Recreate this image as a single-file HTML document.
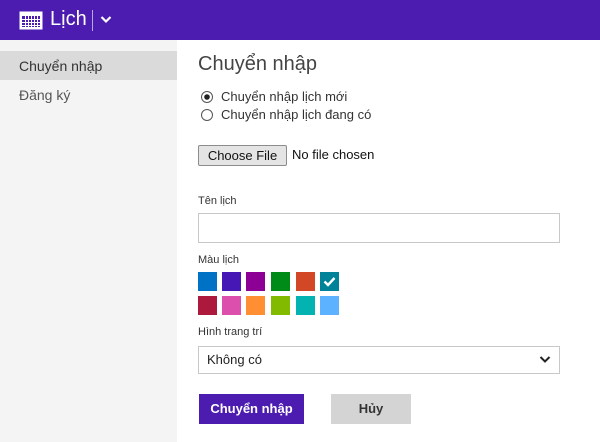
<!DOCTYPE html>
<html><head><meta charset="utf-8"><style>
*{margin:0;padding:0;box-sizing:border-box}
body{width:600px;height:442px;overflow:hidden;background:#fff;font-family:"Liberation Sans",sans-serif;color:#333;position:relative}
.hdr{position:absolute;left:0;top:0;width:600px;height:40px;background:#4c1cb1}
.a{position:absolute;white-space:nowrap}
.side{position:absolute;left:0;top:40px;width:177px;height:402px;background:#f4f4f4}
.sw{position:absolute;width:19px;height:19px}
</style></head><body>
<div class="hdr">
<svg class="a" style="left:19px;top:11px" width="24" height="19" viewBox="0 0 24 19"><rect x="0.5" y="0.5" width="23" height="18" fill="#fff"/><g fill="#4c1cb1"><rect x="3" y="5" width="18" height="11"/></g><g stroke="#fff" stroke-width="1"><path d="M6.5 5v11M9.5 5v11M12.5 5v11M15.5 5v11M18.5 5v11M3 8.5h18M3 11.5h18M3 14.5h18"/></g></svg>
<div class="a" style="left:50px;top:8px;font-size:20px;color:#fff">Lịch</div>
<div class="a" style="left:92px;top:10px;width:1px;height:21px;background:#b9a6e6"></div>
<svg class="a" style="left:100px;top:15px" width="12" height="9"><path d="M1.5 2l4.5 4.5 4.5-4.5" stroke="#fff" stroke-width="2.2" fill="none"/></svg>
</div>
<div class="side">
<div class="a" style="left:0;top:11px;width:177px;height:29px;background:#dadada"></div>
<div class="a" style="left:19px;top:18px;font-size:14px;color:#333">Chuyển nhập</div>
<div class="a" style="left:19px;top:47px;font-size:14px;color:#555">Đăng ký</div>
</div>
<div class="a" style="left:198px;top:53px;font-size:20px;color:#444">Chuyển nhập</div>
<svg class="a" style="left:201px;top:91px" width="12" height="30"><circle cx="6" cy="6" r="5.5" fill="#fff" stroke="#555"/><circle cx="6" cy="6" r="2.8" fill="#222"/><circle cx="6" cy="24" r="5.5" fill="#fff" stroke="#555"/></svg>
<div class="a" style="left:221px;top:89px;font-size:13px">Chuyển nhập lịch mới</div>
<div class="a" style="left:221px;top:107px;font-size:13px">Chuyển nhập lịch đang có</div>
<div class="a" style="left:198px;top:145px;width:89px;height:21px;background:#e4e4e4;border:1px solid #8c8c8c;border-radius:2px;font-size:13px;text-align:center;line-height:19px;color:#111">Choose File</div>
<div class="a" style="left:292px;top:147px;font-size:13px;color:#111">No file chosen</div>
<div class="a" style="left:198px;top:195px;font-size:11px;color:#333">Tên lịch</div>
<div class="a" style="left:198px;top:213px;width:362px;height:30px;border:1px solid #c8c8c8"></div>
<div class="a" style="left:198px;top:254px;font-size:11px;color:#333">Màu lịch</div>
<div class="sw" style="left:198px;top:272px;background:#0072c6"></div>
<div class="sw" style="left:222px;top:272px;background:#4617b4"></div>
<div class="sw" style="left:246px;top:272px;background:#8c0095"></div>
<div class="sw" style="left:271px;top:272px;background:#008a17"></div>
<div class="sw" style="left:296px;top:272px;background:#d24726"></div>
<div class="sw" style="left:320px;top:272px;background:#008299"><svg width="19" height="19"><path d="M4.5 9.5l3.5 3.5 6.5-7" stroke="#fff" stroke-width="2.4" fill="none"/></svg></div>
<div class="sw" style="left:198px;top:296px;background:#ac193d"></div>
<div class="sw" style="left:222px;top:296px;background:#dc4fad"></div>
<div class="sw" style="left:246px;top:296px;background:#ff8f32"></div>
<div class="sw" style="left:271px;top:296px;background:#82ba00"></div>
<div class="sw" style="left:296px;top:296px;background:#03b3b2"></div>
<div class="sw" style="left:320px;top:296px;background:#5db2ff"></div>
<div class="a" style="left:198px;top:326px;font-size:11px;color:#333">Hình trang trí</div>
<div class="a" style="left:198px;top:346px;width:362px;height:28px;border:1px solid #c8c8c8"></div>
<div class="a" style="left:207px;top:352px;font-size:13px;color:#222">Không có</div>
<svg class="a" style="left:539px;top:355px" width="12" height="9"><path d="M1.5 2l4.5 4.5 4.5-4.5" stroke="#222" stroke-width="2" fill="none"/></svg>
<div class="a" style="left:199px;top:394px;width:105px;height:30px;background:#4c1cb1;color:#fff;font-size:13px;font-weight:bold;text-align:center;line-height:30px">Chuyển nhập</div>
<div class="a" style="left:331px;top:394px;width:80px;height:30px;background:#d4d4d4;color:#333;font-size:13px;font-weight:bold;text-align:center;line-height:30px">Hủy</div>
</body></html>
